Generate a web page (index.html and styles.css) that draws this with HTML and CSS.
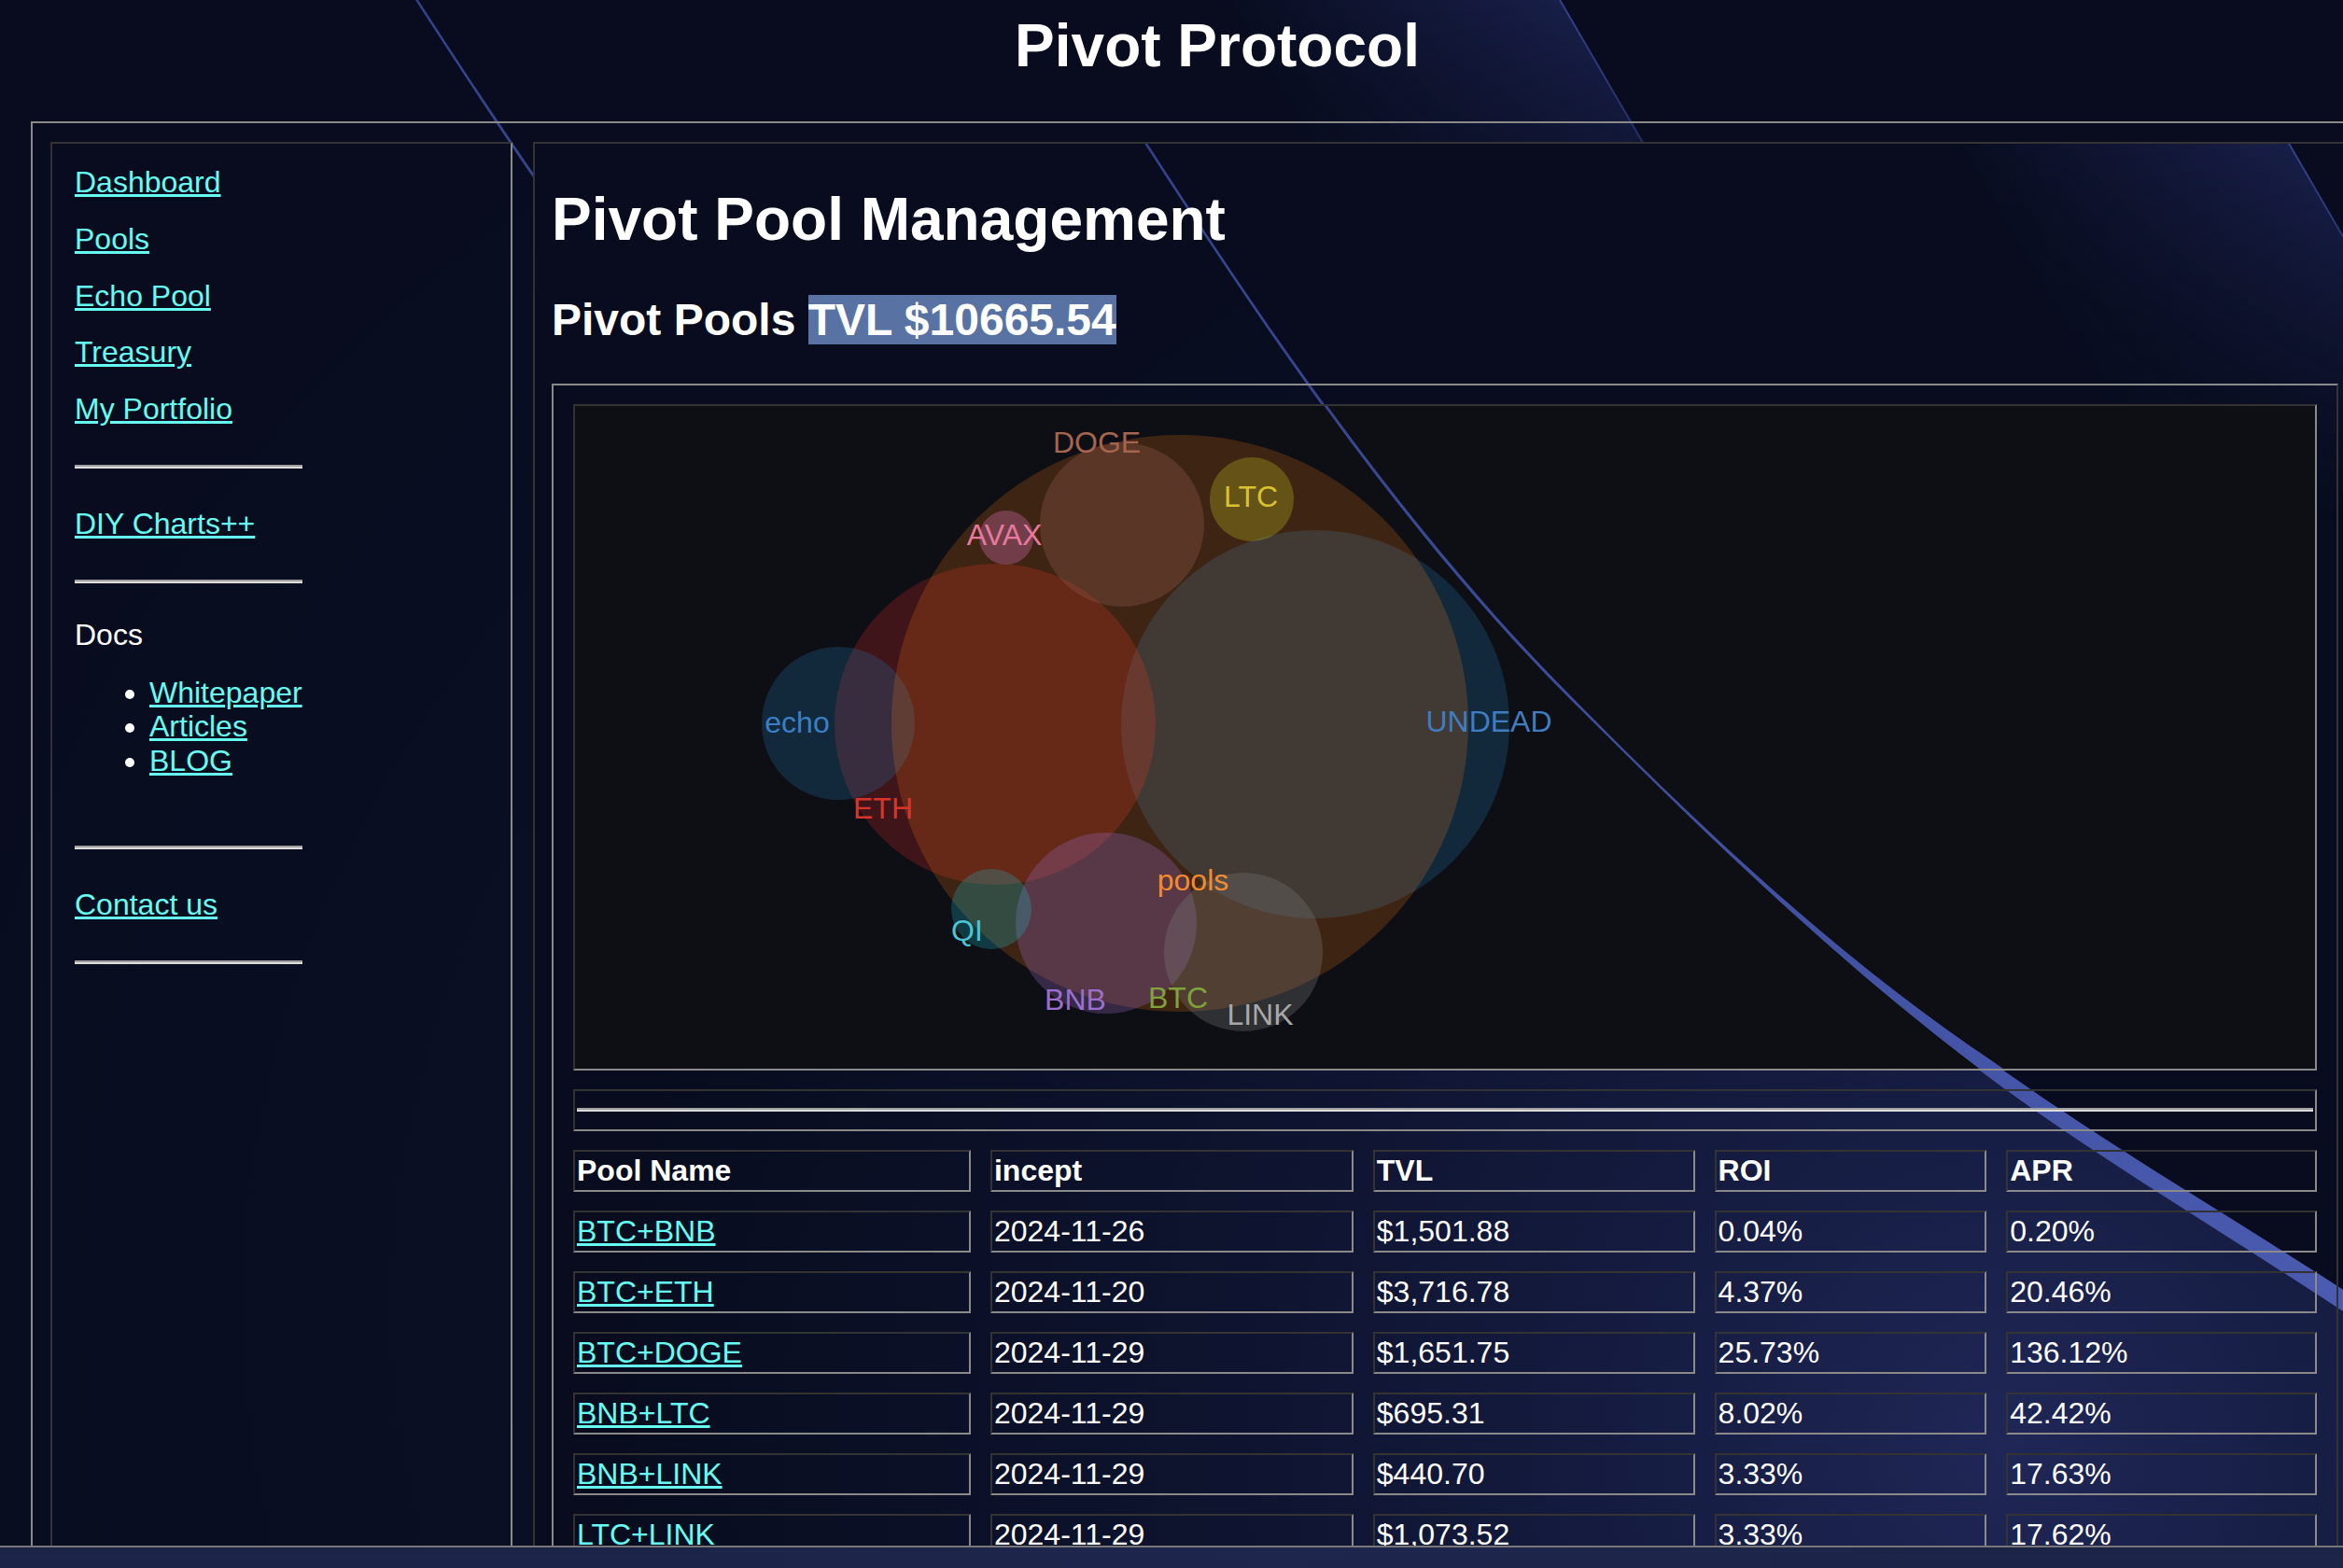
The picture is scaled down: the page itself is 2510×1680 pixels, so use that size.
FILE: index.html
```html
<!DOCTYPE html>
<html lang="en">
<head>
<meta charset="utf-8">
<title>Pivot Protocol</title>
<link rel="stylesheet" href="styles.css">
</head>
<body>
<svg class="svg-defs" width="0" height="0" aria-hidden="true">
  <defs>
    <linearGradient id="bandGrad" gradientUnits="userSpaceOnUse" x1="1225" y1="152" x2="2510" y2="1405">
      <stop offset="0" stop-color="#34428c"/>
      <stop offset="1" stop-color="#4a5bb0"/>
    </linearGradient>
    <radialGradient id="glowGrad" gradientUnits="userSpaceOnUse" cx="2150" cy="1550" r="1500">
      <stop offset="0" stop-color="#27306a" stop-opacity="0.75"/>
      <stop offset="0.55" stop-color="#1a2250" stop-opacity="0.35"/>
      <stop offset="1" stop-color="#1a2250" stop-opacity="0"/>
    </radialGradient>
    <linearGradient id="beamGrad" gradientUnits="userSpaceOnUse" x1="2210" y1="400" x2="2500" y2="235">
      <stop offset="0" stop-color="#1b2250" stop-opacity="0"/>
      <stop offset="1" stop-color="#1b2250" stop-opacity="0.85"/>
    </linearGradient>
    <linearGradient id="fadeGrad" gradientUnits="userSpaceOnUse" x1="0" y1="152" x2="0" y2="560">
      <stop offset="0" stop-color="#fff"/>
      <stop offset="1" stop-color="#000"/>
    </linearGradient>
    <mask id="beamMask" maskUnits="userSpaceOnUse" x="1900" y="100" width="900" height="600">
      <rect x="1900" y="100" width="900" height="600" fill="url(#fadeGrad)"/>
    </mask>
    <path id="glow" d="M1225,152 C1360.6,362 1503,572 1680,749 C1821,890 1965,1030 2125,1150 C2245,1240 2385,1322 2510,1405 L2800,1600 L2800,2300 L400,2300 L400,152 Z" fill="url(#glowGrad)"/>
    <path id="band" d="M1225,152 C1360.6,362 1503,572 1680,749 C1821,890 1965,1030 2125,1150 C2245,1240 2385,1322 2510,1405 L2620,1478 L2632,1458 L2521,1389 C2396,1307 2256,1226 2134,1138 C1968,1027 1822,889 1682,747 C1506,570 1363,361 1228,152 Z" fill="url(#bandGrad)"/>
    <g id="streaks">
      <g mask="url(#beamMask)">
        <polygon points="2100,152 2451,152 2700,580 2350,580" fill="url(#beamGrad)"/>
        <line x1="2451" y1="152" x2="2700" y2="580" stroke="#34438a" stroke-width="2"/>
      </g>
      <use href="#band"/>
    </g>
  </defs>
</svg>

<svg class="page-bg" width="2510" height="1680" viewBox="0 0 2510 1680" aria-hidden="true">
  <g transform="translate(-780 -152)">
    <use href="#glow" opacity="0.35"/>
    <use href="#streaks"/>
  </g>
</svg>

<div class="page">
  <h1 class="site-title">Pivot Protocol</h1>

  <div class="frame">
    <div class="layout">
      <nav class="sidebar">
        <a class="nav-link" href="#">Dashboard</a>
        <a class="nav-link" href="#">Pools</a>
        <a class="nav-link" href="#">Echo Pool</a>
        <a class="nav-link" href="#">Treasury</a>
        <a class="nav-link" href="#">My Portfolio</a>
        <hr class="side-rule">
        <a class="nav-link" href="#">DIY Charts++</a>
        <hr class="side-rule">
        <div class="nav-label">Docs</div>
        <ul class="doc-list">
          <li><a href="#">Whitepaper</a></li>
          <li><a href="#">Articles</a></li>
          <li><a href="#">BLOG</a></li>
        </ul>
        <hr class="side-rule">
        <a class="nav-link" href="#">Contact us</a>
        <hr class="side-rule">
      </nav>

      <main class="main">
        <svg class="main-bg" width="1947" height="1600" viewBox="573 154 1947 1600" aria-hidden="true">
          <use href="#glow"/>
          <use href="#streaks"/>
        </svg>
        <div class="main-inner">
          <h1 class="page-title">Pivot Pool Management</h1>
          <h2 class="tvl">Pivot Pools <span class="tvl-value">TVL $10665.54</span></h2>

          <table class="pool-table">
            <tr>
              <td class="chart-cell" colspan="5">
                <svg class="bubble-chart" width="1864" height="710" viewBox="614 435 1864 710">
                  <use href="#band"/>
                  <g class="bubbles">
                    <circle cx="1407" cy="776" r="208" fill="#1f77b4" fill-opacity="0.25"/>
                    <circle cx="1064" cy="776" r="172" fill="#d62728" fill-opacity="0.25"/>
                    <circle cx="896" cy="775" r="82" fill="#1f77b4" fill-opacity="0.25"/>
                    <circle cx="1262" cy="775" r="309" fill="#ff7f0e" fill-opacity="0.2"/>
                    <circle cx="1200" cy="562" r="88" fill="#8c564b" fill-opacity="0.35"/>
                    <circle cx="1339" cy="535" r="45" fill="#bcbd22" fill-opacity="0.3"/>
                    <circle cx="1076" cy="576" r="29" fill="#e377c2" fill-opacity="0.3"/>
                    <circle cx="1183" cy="989" r="97" fill="#9467bd" fill-opacity="0.3"/>
                    <circle cx="1060" cy="974" r="43" fill="#17becf" fill-opacity="0.25"/>
                    <circle cx="1330" cy="1020" r="85" fill="#7f7f7f" fill-opacity="0.3"/>
                  </g>
                  <g class="bubble-labels">
                    <text x="1173" y="485" fill="#a4644f">DOGE</text>
                    <text x="1338" y="543" fill="#d8c22e">LTC</text>
                    <text x="1074" y="584" fill="#e8799e">AVAX</text>
                    <text x="852" y="785" fill="#3b80c4">echo</text>
                    <text x="1593" y="784" fill="#3f7cc0">UNDEAD</text>
                    <text x="944" y="877" fill="#d8352a">ETH</text>
                    <text x="1276" y="954" fill="#f58a2e">pools</text>
                    <text x="1034" y="1008" fill="#4cc4d4">QI</text>
                    <text x="1150" y="1082" fill="#9b6fcc">BNB</text>
                    <text x="1260" y="1080" fill="#7fa23a">BTC</text>
                    <text x="1348" y="1098" fill="#a8a8a8">LINK</text>
                  </g>
                </svg>
              </td>
            </tr>
            <tr>
              <td class="rule-cell" colspan="5"><hr class="table-rule"></td>
            </tr>
            <tr>
              <th class="col-name">Pool Name</th>
              <th class="col-incept">incept</th>
              <th class="col-tvl">TVL</th>
              <th class="col-roi">ROI</th>
              <th class="col-apr">APR</th>
            </tr>
            <tr><td><a href="#">BTC+BNB</a></td><td>2024-11-26</td><td>$1,501.88</td><td>0.04%</td><td>0.20%</td></tr>
            <tr><td><a href="#">BTC+ETH</a></td><td>2024-11-20</td><td>$3,716.78</td><td>4.37%</td><td>20.46%</td></tr>
            <tr><td><a href="#">BTC+DOGE</a></td><td>2024-11-29</td><td>$1,651.75</td><td>25.73%</td><td>136.12%</td></tr>
            <tr><td><a href="#">BNB+LTC</a></td><td>2024-11-29</td><td>$695.31</td><td>8.02%</td><td>42.42%</td></tr>
            <tr><td><a href="#">BNB+LINK</a></td><td>2024-11-29</td><td>$440.70</td><td>3.33%</td><td>17.63%</td></tr>
            <tr><td><a href="#">LTC+LINK</a></td><td>2024-11-29</td><td>$1,073.52</td><td>3.33%</td><td>17.62%</td></tr>
          </table>
        </div>
      </main>
    </div>
  </div>
</div>
</body>
</html>
```

FILE: styles.css
```css
html, body {
  margin: 0;
  padding: 0;
}

body {
  width: 2510px;
  height: 1680px;
  overflow: hidden;
  position: relative;
  background: linear-gradient(#080c1e 1656px, #1c2447 1656px);
  color: #ffffff;
  font-family: "Liberation Sans", Arial, sans-serif;
  font-size: 32px;
}

a {
  color: #66fcf1;
}

.svg-defs {
  position: absolute;
  width: 0;
  height: 0;
  overflow: hidden;
}

.page-bg {
  position: absolute;
  left: 0;
  top: 0;
  z-index: 0;
  display: block;
}

.page {
  position: relative;
  z-index: 1;
}

.site-title {
  margin: 0;
  padding: 13px 0 45px 98px;
  font-size: 64px;
  line-height: 72px;
  font-weight: bold;
  text-align: center;
}

.frame {
  height: 1526px;
  overflow: hidden;
  border-bottom: 2px solid #777777;
}

.layout {
  display: flex;
  gap: 22px;
  align-items: stretch;
  box-sizing: border-box;
  width: 2620px;
  min-height: 1720px;
  margin-left: 33px;
  padding: 20px 0 0 19px;
  border: 2px solid;
  border-color: #8a8a8a #333333 #333333 #8a8a8a;
}

.sidebar {
  flex: 0 0 495px;
  box-sizing: border-box;
  border: 2px solid;
  border-color: #333333 #8a8a8a #8a8a8a #333333;
  padding: 11px 24px 0;
  line-height: 36.8px;
}

.nav-link {
  display: block;
  width: max-content;
  padding: 12px 0;
}

.nav-label {
  padding: 8px 0 0;
}

.doc-list {
  margin: 25px 0 72px;
  padding-left: 80px;
}

.side-rule {
  width: 244px;
  height: 0;
  margin: 29px 0;
  border: 0;
  border-top: 2px solid #a0a0a0;
  border-bottom: 2px solid #dcdcdc;
}

.main {
  flex: 0 0 1951px;
  box-sizing: border-box;
  position: relative;
  overflow: hidden;
  background: #080c1e;
  border: 2px solid;
  border-color: #333333 #8a8a8a #8a8a8a #333333;
  padding: 0 18px;
}

.main-bg {
  position: absolute;
  left: 0;
  top: 0;
  z-index: 0;
  display: block;
}

.main-inner {
  position: relative;
  z-index: 1;
  width: 1911px;
}

.page-title {
  margin: 45px 0 0;
  font-size: 64px;
  line-height: 72px;
  font-weight: bold;
}

.tvl {
  margin: 44px 0 41px;
  font-size: 48px;
  line-height: 55px;
  font-weight: bold;
}

.tvl-value {
  background: #5873a3;
}

.pool-table {
  width: 1910px;
  border-collapse: separate;
  border-spacing: 21px 20px;
  border: 2px solid;
  border-color: #8a8a8a #333333 #333333 #8a8a8a;
  font-size: 32px;
  line-height: 37px;
}

.pool-table th,
.pool-table td {
  box-sizing: border-box;
  border: 2px solid;
  border-color: #333333 #8a8a8a #8a8a8a #333333;
  padding: 2px;
  text-align: left;
  vertical-align: middle;
  white-space: nowrap;
}

.pool-table th {
  font-weight: bold;
}

.col-name { width: 425px; }
.col-incept { width: 388px; }
.col-tvl { width: 344px; }
.col-roi { width: 291px; }
.col-apr { width: 332px; }

.pool-table .chart-cell {
  padding: 0;
  background: #0e0f14;
}

.bubble-chart {
  display: block;
}

.bubble-labels text {
  font-family: "Liberation Sans", Arial, sans-serif;
  font-size: 32px;
  text-anchor: middle;
}

.table-rule {
  height: 0;
  margin: 16px 0 17px;
  border: 0;
  border-top: 2px solid #a0a0a0;
  border-bottom: 2px solid #dcdcdc;
}
```
